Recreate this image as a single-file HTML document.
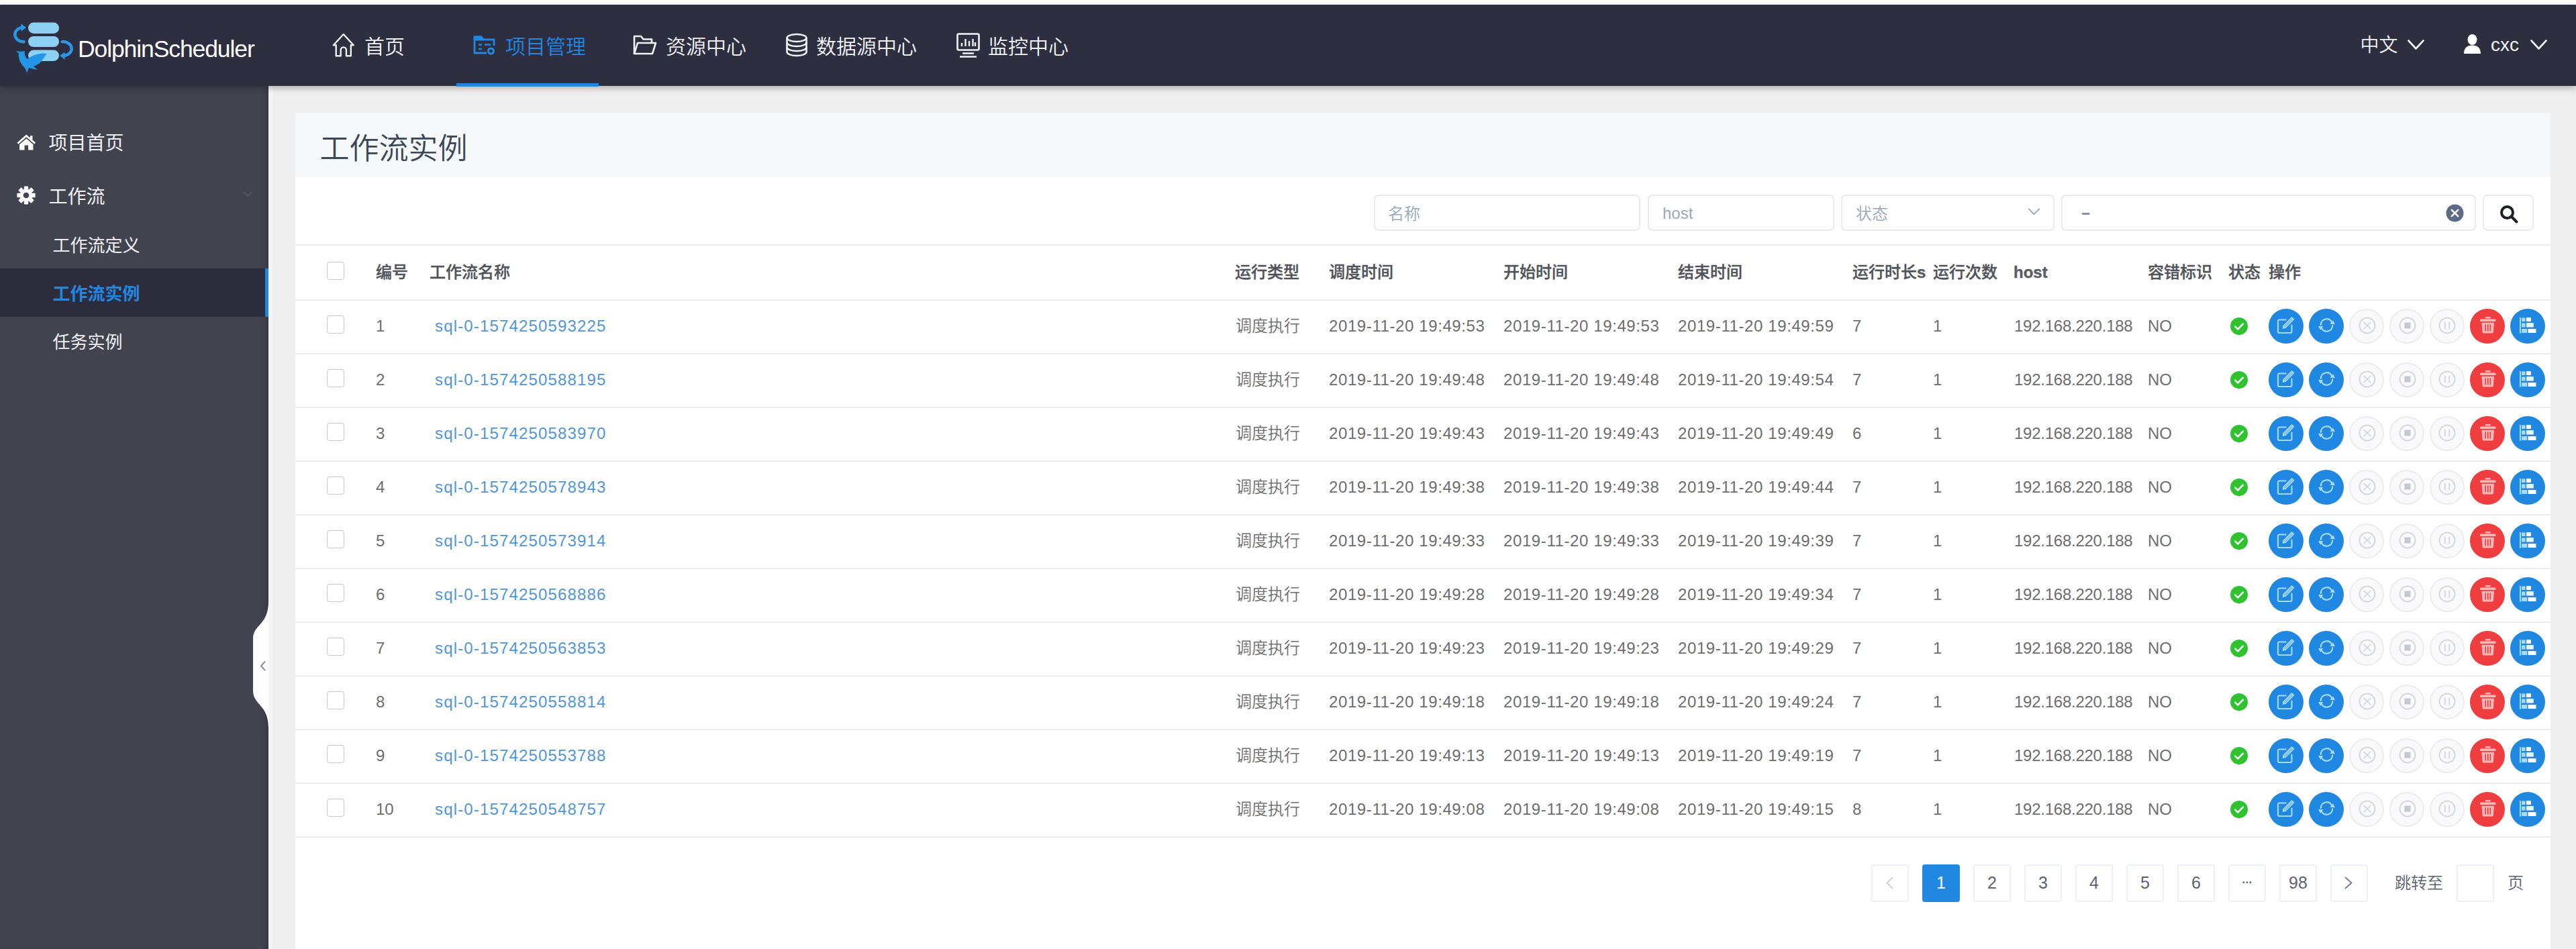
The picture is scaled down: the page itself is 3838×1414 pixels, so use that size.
<!DOCTYPE html>
<html lang="zh-CN"><head><meta charset="utf-8"><title>工作流实例 - DolphinScheduler</title>
<style>
*{box-sizing:border-box;margin:0;padding:0}
html,body{width:3838px;height:1414px;overflow:hidden}
body{position:relative;background:#efeeef;font-family:"Liberation Sans","Noto Sans CJK SC",sans-serif;color:#6e6e6e;font-weight:350}
.abs{position:absolute}
svg{position:absolute;overflow:visible}
#top{position:absolute;left:0;top:0;width:3838px;height:8px;background:#fff}
header{position:absolute;left:0;top:7px;width:3838px;height:121px;background:#2d2e40;box-shadow:0 3px 9px rgba(0,0,0,.28);z-index:5}
aside{position:absolute;left:0;top:128px;width:400px;height:1286px;background:#41444f;z-index:3;box-shadow:inset -9px 0 8px -6px rgba(20,22,35,.28)}
main{position:absolute;left:440px;top:168px;width:3360px;height:1246px;background:#fff}
.band{position:absolute;left:0;top:0;width:3360px;height:96px;background:#f5f9fc}
.inp{position:absolute;top:122px;height:54px;border:2px solid #e8ecf1;border-radius:7px;background:#fff}
.hl{position:absolute;left:0;width:3360px;height:2px;background:#ececf0}
.row{position:absolute;left:0;width:3360px;height:80px;font-size:24px;line-height:80px;color:#6e6e6e;font-weight:350}
.row span{position:absolute;top:-2px;white-space:nowrap}
.row.h span{font-weight:500;color:#50545a;top:0px;-webkit-text-stroke:.35px #50545a}.row.h b{font-weight:700;color:#5a5e64}
.cb{position:absolute;left:46.5px;width:26.5px;height:27px;border:1.6px solid #c6c8cc;border-radius:3.5px;background:#fff}
.c1{left:120px}.c2{left:208px}.c3{left:1401px}.c4{left:1540px}.c5{left:1800px}.c6{left:2060px}
.c7{left:2320px}.c8{left:2440px}.c9{left:2561px}.c10{left:2760px}
.row a{color:#5196db;text-decoration:none;letter-spacing:1.15px}
.d{letter-spacing:.6px}.ip{letter-spacing:-.25px}
.btn{position:absolute;top:12px;width:52px;height:52px;border-radius:50%}
.b{background:#2188e2}.r{background:#f03e40}.g{background:#f9f9fb;border:2px solid #ececf1}
.pg{position:absolute;top:1120px;width:56px;height:56px;border:2px solid #ecf0f5;border-radius:4px;background:#fff;font-size:25px;line-height:50px;text-align:center;color:#5c6370}
.pg.on{background:#2188e2;border-color:#2188e2;color:#fff}
</style></head><body>
<div id="top"></div>
<header>
<svg style="left:0;top:-7px" width="130" height="128" viewBox="0 0 130 128">
<rect x="42" y="33.5" width="46" height="16.5" rx="8.2" fill="#8dd0f4"/>
<rect x="42" y="54" width="46" height="16" rx="8" fill="#8dd0f4"/>
<rect x="42" y="74.5" width="46" height="16.5" rx="8.2" fill="#8dd0f4"/>
<path d="M35.500 62.300 A13.300 10.800 0 0 1 33 40.900" fill="none" stroke="#2a97e4" stroke-width="4.400" stroke-linecap="round"/>
<path d="M31.500 35.300 L31.500 46.700 L39 41 Z" fill="#2a97e4"/>
<path d="M92.500 62.100 A13.300 10.500 0 0 1 95 83" fill="none" stroke="#2a97e4" stroke-width="4.400" stroke-linecap="round"/>
<path d="M96.500 77.400 L96.500 88.800 L89 83.100 Z" fill="#2a97e4"/>
<path d="M24 76 C29 77 33 77 37 76 C36 80 37 84 41 88 C48 82 60 78 70 80 C66 84 64 90 58 95 C54 97 52 98 50 99 L56 104 C50 103 46 102 43 101 L40 109 C39 104 37 101 35 99 C30 94 27 86 28 80 Z" fill="#2496e6"/>
</svg>
<div style="position:absolute;left:116px;top:41.5px;height:49px;line-height:49px;font-size:35.5px;color:#fff;white-space:nowrap;letter-spacing:-1.1px;">DolphinScheduler</div>
<svg style="left:494px;top:42px" width="36" height="36" viewBox="0 0 36 36" fill="none" stroke="#f2f3f6" stroke-width="2.400" stroke-linejoin="round" stroke-linecap="round">
<path d="M2.800 18.200 L17.750 2 L32.700 18.200 H28.800 V34.300 H21.900 V25.500 A4.100 4.100 0 0 0 13.700 25.500 V34.300 H6.700 V18.200 Z"/></svg>
<div style="position:absolute;left:543px;top:40.5px;height:44px;line-height:44px;font-size:30px;color:#f2f3f6;white-space:nowrap;">首页</div>
<svg style="left:705px;top:45px" width="34" height="30" viewBox="0 0 34 30" fill="none" stroke="#2188e2" stroke-width="2.8" stroke-linejoin="round">
<path d="M20 27 H2 V3 H12 L15 7 H31 V16"/><path d="M2 3 H12 L15 7 H2 Z" fill="#2188e2"/>
<path d="M8 14.5 H13 M8 21 H13 M17 14.5 H26" stroke-width="2.6"/>
<circle cx="26.5" cy="24" r="4" stroke-width="3"/></svg>
<div style="position:absolute;left:753px;top:40.5px;height:44px;line-height:44px;font-size:30px;color:#2188e2;white-space:nowrap;">项目管理</div>
<div class="abs" style="left:680px;top:117px;width:212px;height:5px;background:#2188e2"></div>
<svg style="left:943px;top:45px" width="36" height="30" viewBox="0 0 36 30" fill="none" stroke="#f2f3f6" stroke-width="2.6" stroke-linejoin="round">
<path d="M2 28 V2 H12 L15.5 6.5 H28 V12"/><path d="M2 28 L7 12 H34 L29 28 Z"/></svg>
<div style="position:absolute;left:992px;top:40.5px;height:44px;line-height:44px;font-size:30px;color:#f2f3f6;white-space:nowrap;">资源中心</div>
<svg style="left:1170px;top:42px" width="34" height="36" viewBox="0 0 34 36" fill="none" stroke="#f2f3f6" stroke-width="2.6">
<ellipse cx="17" cy="7.5" rx="14.5" ry="5.5"/><path d="M2.5 7.5 V28.5 C2.5 31.5 9 34 17 34 C25 34 31.5 31.5 31.5 28.5 V7.5"/>
<path d="M2.5 14.5 C2.5 17.5 9 20 17 20 C25 20 31.5 17.5 31.5 14.5 M2.5 21.5 C2.5 24.5 9 27 17 27 C25 27 31.5 24.5 31.5 21.5"/></svg>
<div style="position:absolute;left:1216px;top:40.5px;height:44px;line-height:44px;font-size:30px;color:#f2f3f6;white-space:nowrap;">数据源中心</div>
<svg style="left:1425px;top:42px" width="35" height="37" viewBox="0 0 35 37" fill="none" stroke="#f2f3f6" stroke-width="2.6" stroke-linejoin="round">
<rect x="1.5" y="1.5" width="32" height="24" rx="2"/><path d="M8 20 V15 M13.5 20 V9 M19 20 V12 M24.5 20 V9 M28 20 V14" stroke-width="2.4"/>
<path d="M9 30.5 H26 M5 35.5 H30"/></svg>
<div style="position:absolute;left:1472px;top:40.5px;height:44px;line-height:44px;font-size:30px;color:#f2f3f6;white-space:nowrap;">监控中心</div>
<div style="position:absolute;left:3516.5px;top:39.5px;height:42px;line-height:42px;font-size:28px;color:#f2f3f6;white-space:nowrap;">中文</div>
<svg style="left:3587px;top:52px" width="25" height="16" viewBox="0 0 25 16" fill="none" stroke="#f2f3f6" stroke-width="2.6" stroke-linecap="round" stroke-linejoin="round"><path d="M1.5 1.5 L12.5 13.5 L23.5 1.5"/></svg>
<svg style="left:3671px;top:44px" width="25" height="30" viewBox="0 0 25 30" fill="#fff">
<ellipse cx="12.5" cy="8" rx="7" ry="8"/><path d="M0 29 C0 20 5 16.5 12.5 16.5 C20 16.5 25 20 25 29 Z"/></svg>
<div style="position:absolute;left:3711px;top:39.0px;height:42px;line-height:42px;font-size:28px;color:#f2f3f6;white-space:nowrap;">cxc</div>
<svg style="left:3770px;top:52px" width="25" height="16" viewBox="0 0 25 16" fill="none" stroke="#f2f3f6" stroke-width="2.6" stroke-linecap="round" stroke-linejoin="round"><path d="M1.5 1.5 L12.5 13.5 L23.5 1.5"/></svg>
</header>
<aside>
<svg style="left:25px;top:71.5px" width="28.5" height="23.5" viewBox="0 0 28 22" preserveAspectRatio="none" fill="#fff">
<path d="M14 0.5 L0.5 11.8 L2.2 13.8 L14 4 L25.8 13.8 L27.5 11.8 L23 8 V2 H19.5 V5.2 Z"/><path d="M14 6 L4 14.3 V22 H11.3 V15.5 H16.7 V22 H24 V14.3 Z"/></svg>
<div style="position:absolute;left:72.5px;top:65.0px;height:42px;line-height:42px;font-size:28px;color:#f0f1f4;white-space:nowrap;font-weight:400;">项目首页</div>
<svg style="left:25px;top:149px" width="28" height="28" viewBox="0 0 28 28"><g transform="translate(14 14)" fill="#fff">
<circle r="9.2"/><rect x="-3.2" y="-13.6" width="6.4" height="8" rx="1" transform="rotate(0)"/><rect x="-3.2" y="-13.6" width="6.4" height="8" rx="1" transform="rotate(45)"/><rect x="-3.2" y="-13.6" width="6.4" height="8" rx="1" transform="rotate(90)"/><rect x="-3.2" y="-13.6" width="6.4" height="8" rx="1" transform="rotate(135)"/><rect x="-3.2" y="-13.6" width="6.4" height="8" rx="1" transform="rotate(180)"/><rect x="-3.2" y="-13.6" width="6.4" height="8" rx="1" transform="rotate(225)"/><rect x="-3.2" y="-13.6" width="6.4" height="8" rx="1" transform="rotate(270)"/><rect x="-3.2" y="-13.6" width="6.4" height="8" rx="1" transform="rotate(315)"/><circle r="4.3" fill="#41444f"/></g></svg>
<div style="position:absolute;left:72.5px;top:144.5px;height:42px;line-height:42px;font-size:28px;color:#f0f1f4;white-space:nowrap;font-weight:400;">工作流</div>
<svg style="left:362px;top:157px" width="14" height="9" viewBox="0 0 14 9" fill="none" stroke="#4f535f" stroke-width="2.4" stroke-linecap="round" stroke-linejoin="round"><path d="M1.5 1.5 L7 7 L12.5 1.5"/></svg>
<div style="position:absolute;left:78.5px;top:218.0px;height:40px;line-height:40px;font-size:26px;color:#f0f1f4;white-space:nowrap;font-weight:400;">工作流定义</div>
<div class="abs" style="left:0;top:272px;width:400px;height:72px;background:#2b2d3d;border-right:5px solid #2188e2"></div>
<div style="position:absolute;left:78.5px;top:289.5px;height:40px;line-height:40px;font-size:26px;color:#2188e2;white-space:nowrap;font-weight:700;">工作流实例</div>
<div style="position:absolute;left:78.5px;top:361.5px;height:40px;line-height:40px;font-size:26px;color:#f0f1f4;white-space:nowrap;font-weight:400;">任务实例</div>
<svg style="left:370px;top:768px" width="30" height="189" viewBox="0 0 30 189">
<path d="M30 0 C30 36 7 34 7 56 V133 C7 155 30 153 30 189 Z" fill="#fefeff"/>
<path d="M24.500 90 L19 96.200 L24.500 102.400" fill="none" stroke="#8d93a0" stroke-width="2.200" stroke-linecap="round" stroke-linejoin="round"/></svg>
</aside>
<div class="abs" style="left:400px;top:128px;width:6px;height:1286px;background:#f4f4f7"></div>
<main>
<div class="band"></div>
<div style="position:absolute;left:36.5px;top:22.0px;height:64px;line-height:64px;font-size:44px;color:#3a4757;white-space:nowrap;font-weight:350;">工作流实例</div>
<div class="inp" style="left:1607px;width:397px"><div style="position:absolute;left:19px;top:8.5px;height:36px;line-height:36px;font-size:24px;color:#9aa8bc;white-space:nowrap;">名称</div></div>
<div class="inp" style="left:2015px;width:278px"><div style="position:absolute;left:20px;top:8.0px;height:36px;line-height:36px;font-size:24px;color:#9aa8bc;white-space:nowrap;">host</div></div>
<div class="inp" style="left:2303px;width:318px"><div style="position:absolute;left:20px;top:8.5px;height:36px;line-height:36px;font-size:24px;color:#9aa8bc;white-space:nowrap;">状态</div><svg style="left:276px;top:18px" width="19" height="11" viewBox="0 0 20 12" fill="none" stroke="#97a2b3" stroke-width="2" stroke-linecap="round" stroke-linejoin="round"><path d="M1.5 1.5 L10 10 L18.5 1.5"/></svg></div>
<div class="inp" style="left:2631px;width:618px"><div style="position:absolute;left:27px;top:7.5px;height:36px;line-height:36px;font-size:24px;color:#8591a3;white-space:nowrap;"><span style="display:inline-block;transform:scale(1.9,1.5);transform-origin:0 62%">-</span></div><svg style="left:571px;top:12px" width="27" height="27" viewBox="0 0 27 27"><circle cx="13.5" cy="13.5" r="13" fill="#5b6b85"/><path d="M8.8 8.8 L18.2 18.2 M18.2 8.8 L8.8 18.2" stroke="#fff" stroke-width="2.6" stroke-linecap="round"/></svg></div>
<div class="inp" style="left:3259px;width:76px"><svg style="left:23px;top:13px" width="28" height="28" viewBox="0 0 28 28" fill="none" stroke="#1c1f26" stroke-width="4" stroke-linecap="round"><circle cx="11.5" cy="11.5" r="8.5"/><path d="M18.5 18.5 L25.5 25.5"/></svg></div>
<div class="hl" style="top:196px"></div>
<div class="row h" style="top:198px"><i class="cb" style="top:24px"></i><span class="c1">编号</span><span class="c2" style="left:200px">工作流名称</span><span class="c3" style="left:1400px">运行类型</span><span class="c4">调度时间</span><span class="c5">开始时间</span><span class="c6">结束时间</span><span class="c7">运行时长<b>s</b></span><span class="c8">运行次数</span><span class="c9" style="left:2560px"><b>host</b></span><span class="c10">容错标识</span><span style="left:2880px">状态</span><span style="left:2940px">操作</span></div>
<div class="hl" style="top:278px"></div>
<div class="row" style="top:280px"><i class="cb" style="top:22px"></i><span class="c1">1</span><span class="c2"><a>sql-0-1574250593225</a></span><span class="c3">调度执行</span><span class="c4 d">2019-11-20 19:49:53</span><span class="c5 d">2019-11-20 19:49:53</span><span class="c6 d">2019-11-20 19:49:59</span><span class="c7">7</span><span class="c8">1</span><span class="c9 ip">192.168.220.188</span><span class="c10">NO</span><svg style="left:2883px;top:25px" width="26" height="26" viewBox="0 0 26 26"><circle cx="13" cy="13" r="13" fill="#2fc32f"/><path d="M7.300 13.600 L11.300 17.400 L18.900 9.700" fill="none" stroke="#fff" stroke-width="2.500" stroke-linecap="round" stroke-linejoin="round"/></svg><div class="btn b" style="left:2939.5px"><svg style="left:12px;top:11px" width="28" height="27" viewBox="0 0 28 27" fill="none" stroke="#a6dafb" stroke-width="2.1" stroke-linejoin="round" stroke-linecap="round"><path d="M13.5 5.500 H4 A2 2 0 0 0 2 7.500 V23 A2 2 0 0 0 4 25 H20.500 A2 2 0 0 0 22.500 23 V13.500"/><path d="M9.500 17.800 L10.300 14.300 L22.500 2.100 L25.300 4.900 L13.100 17.100 Z" stroke-width="1.700"/><path d="M10.300 17 L23.500 3.800" stroke-width="1.400"/></svg></div><div class="btn b" style="left:2999.5px"><svg style="left:13px;top:14px" width="27" height="21" viewBox="0 0 27 21" fill="none" stroke="#a6dafb" stroke-width="2.200" stroke-linecap="round"><path d="M4.800 10 A8.700 8.700 0 0 1 20.800 5.300"/><path d="M22.200 11 A8.700 8.700 0 0 1 6.200 15.700"/><path d="M26 9.300 L18.500 8.800 L23 3.200 Z" fill="#a6dafb" stroke="none"/><path d="M1 11.700 L8.500 12.200 L4 17.800 Z" fill="#a6dafb" stroke="none"/></svg></div><div class="btn g" style="left:3059.5px"><svg style="left:12px;top:10px" width="26" height="26" viewBox="0 0 26 26" fill="none" stroke="#d6d8e0" stroke-width="2"><circle cx="13" cy="13" r="11.500"/><path d="M8.300 8.300 L17.700 17.700 M17.700 8.300 L8.300 17.700" stroke-linecap="round" stroke-width="1.800"/></svg></div><div class="btn g" style="left:3119.5px"><svg style="left:12px;top:10px" width="26" height="26" viewBox="0 0 26 26" fill="none" stroke="#d6d8e0" stroke-width="2"><circle cx="13" cy="13" r="11.500"/><rect x="8.500" y="8.500" width="9" height="9" rx="1" fill="#c6c8d0" stroke="none"/></svg></div><div class="btn g" style="left:3179.5px"><svg style="left:11.500px;top:10px" width="26" height="26" viewBox="0 0 26 26" fill="none" stroke="#d6d8e0" stroke-width="2"><circle cx="13" cy="13" r="11.500"/><path d="M9.800 8.500 V17.500 M16.200 8.500 V17.500" stroke-width="2" stroke-linecap="round"/></svg></div><div class="btn r" style="left:3239.5px"><svg style="left:15px;top:11.500px" width="23.500" height="24.500" viewBox="0 0 24 25" fill="#fbb9ba"><path d="M8 0 H16 V2.500 H8 Z"/><rect x="0" y="3.500" width="24" height="3.600" rx="1"/><path d="M2.500 8.800 H21.500 L20.300 23.500 A1.500 1.500 0 0 1 18.800 25 H5.200 A1.500 1.500 0 0 1 3.700 23.500 Z"/><path d="M8.300 11.500 V22 M12 11.500 V22 M15.700 11.500 V22" stroke="#f03e40" stroke-width="1.700" fill="none"/></svg></div><div class="btn b" style="left:3299.5px"><svg style="left:14.500px;top:12.500px" width="24.500" height="23.500" viewBox="0 0 24.500 23.500" fill="#a6dafb"><rect x="0" y="0" width="2" height="23.500"/><rect x="3" y="0.500" width="5.500" height="5.500"/><rect x="10" y="0" width="6.800" height="6" fill="#fff"/><rect x="3" y="8.500" width="5.500" height="6"/><rect x="10" y="8" width="10.800" height="6.500" fill="#e8f5fe"/><rect x="3" y="17" width="8" height="6"/><rect x="12.500" y="17" width="12" height="6" fill="#fff"/></svg></div></div>
<div class="hl" style="top:358px"></div>
<div class="row" style="top:360px"><i class="cb" style="top:22px"></i><span class="c1">2</span><span class="c2"><a>sql-0-1574250588195</a></span><span class="c3">调度执行</span><span class="c4 d">2019-11-20 19:49:48</span><span class="c5 d">2019-11-20 19:49:48</span><span class="c6 d">2019-11-20 19:49:54</span><span class="c7">7</span><span class="c8">1</span><span class="c9 ip">192.168.220.188</span><span class="c10">NO</span><svg style="left:2883px;top:25px" width="26" height="26" viewBox="0 0 26 26"><circle cx="13" cy="13" r="13" fill="#2fc32f"/><path d="M7.300 13.600 L11.300 17.400 L18.900 9.700" fill="none" stroke="#fff" stroke-width="2.500" stroke-linecap="round" stroke-linejoin="round"/></svg><div class="btn b" style="left:2939.5px"><svg style="left:12px;top:11px" width="28" height="27" viewBox="0 0 28 27" fill="none" stroke="#a6dafb" stroke-width="2.1" stroke-linejoin="round" stroke-linecap="round"><path d="M13.5 5.500 H4 A2 2 0 0 0 2 7.500 V23 A2 2 0 0 0 4 25 H20.500 A2 2 0 0 0 22.500 23 V13.500"/><path d="M9.500 17.800 L10.300 14.300 L22.500 2.100 L25.300 4.900 L13.100 17.100 Z" stroke-width="1.700"/><path d="M10.300 17 L23.500 3.800" stroke-width="1.400"/></svg></div><div class="btn b" style="left:2999.5px"><svg style="left:13px;top:14px" width="27" height="21" viewBox="0 0 27 21" fill="none" stroke="#a6dafb" stroke-width="2.200" stroke-linecap="round"><path d="M4.800 10 A8.700 8.700 0 0 1 20.800 5.300"/><path d="M22.200 11 A8.700 8.700 0 0 1 6.200 15.700"/><path d="M26 9.300 L18.500 8.800 L23 3.200 Z" fill="#a6dafb" stroke="none"/><path d="M1 11.700 L8.500 12.200 L4 17.800 Z" fill="#a6dafb" stroke="none"/></svg></div><div class="btn g" style="left:3059.5px"><svg style="left:12px;top:10px" width="26" height="26" viewBox="0 0 26 26" fill="none" stroke="#d6d8e0" stroke-width="2"><circle cx="13" cy="13" r="11.500"/><path d="M8.300 8.300 L17.700 17.700 M17.700 8.300 L8.300 17.700" stroke-linecap="round" stroke-width="1.800"/></svg></div><div class="btn g" style="left:3119.5px"><svg style="left:12px;top:10px" width="26" height="26" viewBox="0 0 26 26" fill="none" stroke="#d6d8e0" stroke-width="2"><circle cx="13" cy="13" r="11.500"/><rect x="8.500" y="8.500" width="9" height="9" rx="1" fill="#c6c8d0" stroke="none"/></svg></div><div class="btn g" style="left:3179.5px"><svg style="left:11.500px;top:10px" width="26" height="26" viewBox="0 0 26 26" fill="none" stroke="#d6d8e0" stroke-width="2"><circle cx="13" cy="13" r="11.500"/><path d="M9.800 8.500 V17.500 M16.200 8.500 V17.500" stroke-width="2" stroke-linecap="round"/></svg></div><div class="btn r" style="left:3239.5px"><svg style="left:15px;top:11.500px" width="23.500" height="24.500" viewBox="0 0 24 25" fill="#fbb9ba"><path d="M8 0 H16 V2.500 H8 Z"/><rect x="0" y="3.500" width="24" height="3.600" rx="1"/><path d="M2.500 8.800 H21.500 L20.300 23.500 A1.500 1.500 0 0 1 18.800 25 H5.200 A1.500 1.500 0 0 1 3.700 23.500 Z"/><path d="M8.300 11.500 V22 M12 11.500 V22 M15.700 11.500 V22" stroke="#f03e40" stroke-width="1.700" fill="none"/></svg></div><div class="btn b" style="left:3299.5px"><svg style="left:14.500px;top:12.500px" width="24.500" height="23.500" viewBox="0 0 24.500 23.500" fill="#a6dafb"><rect x="0" y="0" width="2" height="23.500"/><rect x="3" y="0.500" width="5.500" height="5.500"/><rect x="10" y="0" width="6.800" height="6" fill="#fff"/><rect x="3" y="8.500" width="5.500" height="6"/><rect x="10" y="8" width="10.800" height="6.500" fill="#e8f5fe"/><rect x="3" y="17" width="8" height="6"/><rect x="12.500" y="17" width="12" height="6" fill="#fff"/></svg></div></div>
<div class="hl" style="top:438px"></div>
<div class="row" style="top:440px"><i class="cb" style="top:22px"></i><span class="c1">3</span><span class="c2"><a>sql-0-1574250583970</a></span><span class="c3">调度执行</span><span class="c4 d">2019-11-20 19:49:43</span><span class="c5 d">2019-11-20 19:49:43</span><span class="c6 d">2019-11-20 19:49:49</span><span class="c7">6</span><span class="c8">1</span><span class="c9 ip">192.168.220.188</span><span class="c10">NO</span><svg style="left:2883px;top:25px" width="26" height="26" viewBox="0 0 26 26"><circle cx="13" cy="13" r="13" fill="#2fc32f"/><path d="M7.300 13.600 L11.300 17.400 L18.900 9.700" fill="none" stroke="#fff" stroke-width="2.500" stroke-linecap="round" stroke-linejoin="round"/></svg><div class="btn b" style="left:2939.5px"><svg style="left:12px;top:11px" width="28" height="27" viewBox="0 0 28 27" fill="none" stroke="#a6dafb" stroke-width="2.1" stroke-linejoin="round" stroke-linecap="round"><path d="M13.5 5.500 H4 A2 2 0 0 0 2 7.500 V23 A2 2 0 0 0 4 25 H20.500 A2 2 0 0 0 22.500 23 V13.500"/><path d="M9.500 17.800 L10.300 14.300 L22.500 2.100 L25.300 4.900 L13.100 17.100 Z" stroke-width="1.700"/><path d="M10.300 17 L23.500 3.800" stroke-width="1.400"/></svg></div><div class="btn b" style="left:2999.5px"><svg style="left:13px;top:14px" width="27" height="21" viewBox="0 0 27 21" fill="none" stroke="#a6dafb" stroke-width="2.200" stroke-linecap="round"><path d="M4.800 10 A8.700 8.700 0 0 1 20.800 5.300"/><path d="M22.200 11 A8.700 8.700 0 0 1 6.200 15.700"/><path d="M26 9.300 L18.500 8.800 L23 3.200 Z" fill="#a6dafb" stroke="none"/><path d="M1 11.700 L8.500 12.200 L4 17.800 Z" fill="#a6dafb" stroke="none"/></svg></div><div class="btn g" style="left:3059.5px"><svg style="left:12px;top:10px" width="26" height="26" viewBox="0 0 26 26" fill="none" stroke="#d6d8e0" stroke-width="2"><circle cx="13" cy="13" r="11.500"/><path d="M8.300 8.300 L17.700 17.700 M17.700 8.300 L8.300 17.700" stroke-linecap="round" stroke-width="1.800"/></svg></div><div class="btn g" style="left:3119.5px"><svg style="left:12px;top:10px" width="26" height="26" viewBox="0 0 26 26" fill="none" stroke="#d6d8e0" stroke-width="2"><circle cx="13" cy="13" r="11.500"/><rect x="8.500" y="8.500" width="9" height="9" rx="1" fill="#c6c8d0" stroke="none"/></svg></div><div class="btn g" style="left:3179.5px"><svg style="left:11.500px;top:10px" width="26" height="26" viewBox="0 0 26 26" fill="none" stroke="#d6d8e0" stroke-width="2"><circle cx="13" cy="13" r="11.500"/><path d="M9.800 8.500 V17.500 M16.200 8.500 V17.500" stroke-width="2" stroke-linecap="round"/></svg></div><div class="btn r" style="left:3239.5px"><svg style="left:15px;top:11.500px" width="23.500" height="24.500" viewBox="0 0 24 25" fill="#fbb9ba"><path d="M8 0 H16 V2.500 H8 Z"/><rect x="0" y="3.500" width="24" height="3.600" rx="1"/><path d="M2.500 8.800 H21.500 L20.300 23.500 A1.500 1.500 0 0 1 18.800 25 H5.200 A1.500 1.500 0 0 1 3.700 23.500 Z"/><path d="M8.300 11.500 V22 M12 11.500 V22 M15.700 11.500 V22" stroke="#f03e40" stroke-width="1.700" fill="none"/></svg></div><div class="btn b" style="left:3299.5px"><svg style="left:14.500px;top:12.500px" width="24.500" height="23.500" viewBox="0 0 24.500 23.500" fill="#a6dafb"><rect x="0" y="0" width="2" height="23.500"/><rect x="3" y="0.500" width="5.500" height="5.500"/><rect x="10" y="0" width="6.800" height="6" fill="#fff"/><rect x="3" y="8.500" width="5.500" height="6"/><rect x="10" y="8" width="10.800" height="6.500" fill="#e8f5fe"/><rect x="3" y="17" width="8" height="6"/><rect x="12.500" y="17" width="12" height="6" fill="#fff"/></svg></div></div>
<div class="hl" style="top:518px"></div>
<div class="row" style="top:520px"><i class="cb" style="top:22px"></i><span class="c1">4</span><span class="c2"><a>sql-0-1574250578943</a></span><span class="c3">调度执行</span><span class="c4 d">2019-11-20 19:49:38</span><span class="c5 d">2019-11-20 19:49:38</span><span class="c6 d">2019-11-20 19:49:44</span><span class="c7">7</span><span class="c8">1</span><span class="c9 ip">192.168.220.188</span><span class="c10">NO</span><svg style="left:2883px;top:25px" width="26" height="26" viewBox="0 0 26 26"><circle cx="13" cy="13" r="13" fill="#2fc32f"/><path d="M7.300 13.600 L11.300 17.400 L18.900 9.700" fill="none" stroke="#fff" stroke-width="2.500" stroke-linecap="round" stroke-linejoin="round"/></svg><div class="btn b" style="left:2939.5px"><svg style="left:12px;top:11px" width="28" height="27" viewBox="0 0 28 27" fill="none" stroke="#a6dafb" stroke-width="2.1" stroke-linejoin="round" stroke-linecap="round"><path d="M13.5 5.500 H4 A2 2 0 0 0 2 7.500 V23 A2 2 0 0 0 4 25 H20.500 A2 2 0 0 0 22.500 23 V13.500"/><path d="M9.500 17.800 L10.300 14.300 L22.500 2.100 L25.300 4.900 L13.100 17.100 Z" stroke-width="1.700"/><path d="M10.300 17 L23.500 3.800" stroke-width="1.400"/></svg></div><div class="btn b" style="left:2999.5px"><svg style="left:13px;top:14px" width="27" height="21" viewBox="0 0 27 21" fill="none" stroke="#a6dafb" stroke-width="2.200" stroke-linecap="round"><path d="M4.800 10 A8.700 8.700 0 0 1 20.800 5.300"/><path d="M22.200 11 A8.700 8.700 0 0 1 6.200 15.700"/><path d="M26 9.300 L18.500 8.800 L23 3.200 Z" fill="#a6dafb" stroke="none"/><path d="M1 11.700 L8.500 12.200 L4 17.800 Z" fill="#a6dafb" stroke="none"/></svg></div><div class="btn g" style="left:3059.5px"><svg style="left:12px;top:10px" width="26" height="26" viewBox="0 0 26 26" fill="none" stroke="#d6d8e0" stroke-width="2"><circle cx="13" cy="13" r="11.500"/><path d="M8.300 8.300 L17.700 17.700 M17.700 8.300 L8.300 17.700" stroke-linecap="round" stroke-width="1.800"/></svg></div><div class="btn g" style="left:3119.5px"><svg style="left:12px;top:10px" width="26" height="26" viewBox="0 0 26 26" fill="none" stroke="#d6d8e0" stroke-width="2"><circle cx="13" cy="13" r="11.500"/><rect x="8.500" y="8.500" width="9" height="9" rx="1" fill="#c6c8d0" stroke="none"/></svg></div><div class="btn g" style="left:3179.5px"><svg style="left:11.500px;top:10px" width="26" height="26" viewBox="0 0 26 26" fill="none" stroke="#d6d8e0" stroke-width="2"><circle cx="13" cy="13" r="11.500"/><path d="M9.800 8.500 V17.500 M16.200 8.500 V17.500" stroke-width="2" stroke-linecap="round"/></svg></div><div class="btn r" style="left:3239.5px"><svg style="left:15px;top:11.500px" width="23.500" height="24.500" viewBox="0 0 24 25" fill="#fbb9ba"><path d="M8 0 H16 V2.500 H8 Z"/><rect x="0" y="3.500" width="24" height="3.600" rx="1"/><path d="M2.500 8.800 H21.500 L20.300 23.500 A1.500 1.500 0 0 1 18.800 25 H5.200 A1.500 1.500 0 0 1 3.700 23.500 Z"/><path d="M8.300 11.500 V22 M12 11.500 V22 M15.700 11.500 V22" stroke="#f03e40" stroke-width="1.700" fill="none"/></svg></div><div class="btn b" style="left:3299.5px"><svg style="left:14.500px;top:12.500px" width="24.500" height="23.500" viewBox="0 0 24.500 23.500" fill="#a6dafb"><rect x="0" y="0" width="2" height="23.500"/><rect x="3" y="0.500" width="5.500" height="5.500"/><rect x="10" y="0" width="6.800" height="6" fill="#fff"/><rect x="3" y="8.500" width="5.500" height="6"/><rect x="10" y="8" width="10.800" height="6.500" fill="#e8f5fe"/><rect x="3" y="17" width="8" height="6"/><rect x="12.500" y="17" width="12" height="6" fill="#fff"/></svg></div></div>
<div class="hl" style="top:598px"></div>
<div class="row" style="top:600px"><i class="cb" style="top:22px"></i><span class="c1">5</span><span class="c2"><a>sql-0-1574250573914</a></span><span class="c3">调度执行</span><span class="c4 d">2019-11-20 19:49:33</span><span class="c5 d">2019-11-20 19:49:33</span><span class="c6 d">2019-11-20 19:49:39</span><span class="c7">7</span><span class="c8">1</span><span class="c9 ip">192.168.220.188</span><span class="c10">NO</span><svg style="left:2883px;top:25px" width="26" height="26" viewBox="0 0 26 26"><circle cx="13" cy="13" r="13" fill="#2fc32f"/><path d="M7.300 13.600 L11.300 17.400 L18.900 9.700" fill="none" stroke="#fff" stroke-width="2.500" stroke-linecap="round" stroke-linejoin="round"/></svg><div class="btn b" style="left:2939.5px"><svg style="left:12px;top:11px" width="28" height="27" viewBox="0 0 28 27" fill="none" stroke="#a6dafb" stroke-width="2.1" stroke-linejoin="round" stroke-linecap="round"><path d="M13.5 5.500 H4 A2 2 0 0 0 2 7.500 V23 A2 2 0 0 0 4 25 H20.500 A2 2 0 0 0 22.500 23 V13.500"/><path d="M9.500 17.800 L10.300 14.300 L22.500 2.100 L25.300 4.900 L13.100 17.100 Z" stroke-width="1.700"/><path d="M10.300 17 L23.500 3.800" stroke-width="1.400"/></svg></div><div class="btn b" style="left:2999.5px"><svg style="left:13px;top:14px" width="27" height="21" viewBox="0 0 27 21" fill="none" stroke="#a6dafb" stroke-width="2.200" stroke-linecap="round"><path d="M4.800 10 A8.700 8.700 0 0 1 20.800 5.300"/><path d="M22.200 11 A8.700 8.700 0 0 1 6.200 15.700"/><path d="M26 9.300 L18.500 8.800 L23 3.200 Z" fill="#a6dafb" stroke="none"/><path d="M1 11.700 L8.500 12.200 L4 17.800 Z" fill="#a6dafb" stroke="none"/></svg></div><div class="btn g" style="left:3059.5px"><svg style="left:12px;top:10px" width="26" height="26" viewBox="0 0 26 26" fill="none" stroke="#d6d8e0" stroke-width="2"><circle cx="13" cy="13" r="11.500"/><path d="M8.300 8.300 L17.700 17.700 M17.700 8.300 L8.300 17.700" stroke-linecap="round" stroke-width="1.800"/></svg></div><div class="btn g" style="left:3119.5px"><svg style="left:12px;top:10px" width="26" height="26" viewBox="0 0 26 26" fill="none" stroke="#d6d8e0" stroke-width="2"><circle cx="13" cy="13" r="11.500"/><rect x="8.500" y="8.500" width="9" height="9" rx="1" fill="#c6c8d0" stroke="none"/></svg></div><div class="btn g" style="left:3179.5px"><svg style="left:11.500px;top:10px" width="26" height="26" viewBox="0 0 26 26" fill="none" stroke="#d6d8e0" stroke-width="2"><circle cx="13" cy="13" r="11.500"/><path d="M9.800 8.500 V17.500 M16.200 8.500 V17.500" stroke-width="2" stroke-linecap="round"/></svg></div><div class="btn r" style="left:3239.5px"><svg style="left:15px;top:11.500px" width="23.500" height="24.500" viewBox="0 0 24 25" fill="#fbb9ba"><path d="M8 0 H16 V2.500 H8 Z"/><rect x="0" y="3.500" width="24" height="3.600" rx="1"/><path d="M2.500 8.800 H21.500 L20.300 23.500 A1.500 1.500 0 0 1 18.800 25 H5.200 A1.500 1.500 0 0 1 3.700 23.500 Z"/><path d="M8.300 11.500 V22 M12 11.500 V22 M15.700 11.500 V22" stroke="#f03e40" stroke-width="1.700" fill="none"/></svg></div><div class="btn b" style="left:3299.5px"><svg style="left:14.500px;top:12.500px" width="24.500" height="23.500" viewBox="0 0 24.500 23.500" fill="#a6dafb"><rect x="0" y="0" width="2" height="23.500"/><rect x="3" y="0.500" width="5.500" height="5.500"/><rect x="10" y="0" width="6.800" height="6" fill="#fff"/><rect x="3" y="8.500" width="5.500" height="6"/><rect x="10" y="8" width="10.800" height="6.500" fill="#e8f5fe"/><rect x="3" y="17" width="8" height="6"/><rect x="12.500" y="17" width="12" height="6" fill="#fff"/></svg></div></div>
<div class="hl" style="top:678px"></div>
<div class="row" style="top:680px"><i class="cb" style="top:22px"></i><span class="c1">6</span><span class="c2"><a>sql-0-1574250568886</a></span><span class="c3">调度执行</span><span class="c4 d">2019-11-20 19:49:28</span><span class="c5 d">2019-11-20 19:49:28</span><span class="c6 d">2019-11-20 19:49:34</span><span class="c7">7</span><span class="c8">1</span><span class="c9 ip">192.168.220.188</span><span class="c10">NO</span><svg style="left:2883px;top:25px" width="26" height="26" viewBox="0 0 26 26"><circle cx="13" cy="13" r="13" fill="#2fc32f"/><path d="M7.300 13.600 L11.300 17.400 L18.900 9.700" fill="none" stroke="#fff" stroke-width="2.500" stroke-linecap="round" stroke-linejoin="round"/></svg><div class="btn b" style="left:2939.5px"><svg style="left:12px;top:11px" width="28" height="27" viewBox="0 0 28 27" fill="none" stroke="#a6dafb" stroke-width="2.1" stroke-linejoin="round" stroke-linecap="round"><path d="M13.5 5.500 H4 A2 2 0 0 0 2 7.500 V23 A2 2 0 0 0 4 25 H20.500 A2 2 0 0 0 22.500 23 V13.500"/><path d="M9.500 17.800 L10.300 14.300 L22.500 2.100 L25.300 4.900 L13.100 17.100 Z" stroke-width="1.700"/><path d="M10.300 17 L23.500 3.800" stroke-width="1.400"/></svg></div><div class="btn b" style="left:2999.5px"><svg style="left:13px;top:14px" width="27" height="21" viewBox="0 0 27 21" fill="none" stroke="#a6dafb" stroke-width="2.200" stroke-linecap="round"><path d="M4.800 10 A8.700 8.700 0 0 1 20.800 5.300"/><path d="M22.200 11 A8.700 8.700 0 0 1 6.200 15.700"/><path d="M26 9.300 L18.500 8.800 L23 3.200 Z" fill="#a6dafb" stroke="none"/><path d="M1 11.700 L8.500 12.200 L4 17.800 Z" fill="#a6dafb" stroke="none"/></svg></div><div class="btn g" style="left:3059.5px"><svg style="left:12px;top:10px" width="26" height="26" viewBox="0 0 26 26" fill="none" stroke="#d6d8e0" stroke-width="2"><circle cx="13" cy="13" r="11.500"/><path d="M8.300 8.300 L17.700 17.700 M17.700 8.300 L8.300 17.700" stroke-linecap="round" stroke-width="1.800"/></svg></div><div class="btn g" style="left:3119.5px"><svg style="left:12px;top:10px" width="26" height="26" viewBox="0 0 26 26" fill="none" stroke="#d6d8e0" stroke-width="2"><circle cx="13" cy="13" r="11.500"/><rect x="8.500" y="8.500" width="9" height="9" rx="1" fill="#c6c8d0" stroke="none"/></svg></div><div class="btn g" style="left:3179.5px"><svg style="left:11.500px;top:10px" width="26" height="26" viewBox="0 0 26 26" fill="none" stroke="#d6d8e0" stroke-width="2"><circle cx="13" cy="13" r="11.500"/><path d="M9.800 8.500 V17.500 M16.200 8.500 V17.500" stroke-width="2" stroke-linecap="round"/></svg></div><div class="btn r" style="left:3239.5px"><svg style="left:15px;top:11.500px" width="23.500" height="24.500" viewBox="0 0 24 25" fill="#fbb9ba"><path d="M8 0 H16 V2.500 H8 Z"/><rect x="0" y="3.500" width="24" height="3.600" rx="1"/><path d="M2.500 8.800 H21.500 L20.300 23.500 A1.500 1.500 0 0 1 18.800 25 H5.200 A1.500 1.500 0 0 1 3.700 23.500 Z"/><path d="M8.300 11.500 V22 M12 11.500 V22 M15.700 11.500 V22" stroke="#f03e40" stroke-width="1.700" fill="none"/></svg></div><div class="btn b" style="left:3299.5px"><svg style="left:14.500px;top:12.500px" width="24.500" height="23.500" viewBox="0 0 24.500 23.500" fill="#a6dafb"><rect x="0" y="0" width="2" height="23.500"/><rect x="3" y="0.500" width="5.500" height="5.500"/><rect x="10" y="0" width="6.800" height="6" fill="#fff"/><rect x="3" y="8.500" width="5.500" height="6"/><rect x="10" y="8" width="10.800" height="6.500" fill="#e8f5fe"/><rect x="3" y="17" width="8" height="6"/><rect x="12.500" y="17" width="12" height="6" fill="#fff"/></svg></div></div>
<div class="hl" style="top:758px"></div>
<div class="row" style="top:760px"><i class="cb" style="top:22px"></i><span class="c1">7</span><span class="c2"><a>sql-0-1574250563853</a></span><span class="c3">调度执行</span><span class="c4 d">2019-11-20 19:49:23</span><span class="c5 d">2019-11-20 19:49:23</span><span class="c6 d">2019-11-20 19:49:29</span><span class="c7">7</span><span class="c8">1</span><span class="c9 ip">192.168.220.188</span><span class="c10">NO</span><svg style="left:2883px;top:25px" width="26" height="26" viewBox="0 0 26 26"><circle cx="13" cy="13" r="13" fill="#2fc32f"/><path d="M7.300 13.600 L11.300 17.400 L18.900 9.700" fill="none" stroke="#fff" stroke-width="2.500" stroke-linecap="round" stroke-linejoin="round"/></svg><div class="btn b" style="left:2939.5px"><svg style="left:12px;top:11px" width="28" height="27" viewBox="0 0 28 27" fill="none" stroke="#a6dafb" stroke-width="2.1" stroke-linejoin="round" stroke-linecap="round"><path d="M13.5 5.500 H4 A2 2 0 0 0 2 7.500 V23 A2 2 0 0 0 4 25 H20.500 A2 2 0 0 0 22.500 23 V13.500"/><path d="M9.500 17.800 L10.300 14.300 L22.500 2.100 L25.300 4.900 L13.100 17.100 Z" stroke-width="1.700"/><path d="M10.300 17 L23.500 3.800" stroke-width="1.400"/></svg></div><div class="btn b" style="left:2999.5px"><svg style="left:13px;top:14px" width="27" height="21" viewBox="0 0 27 21" fill="none" stroke="#a6dafb" stroke-width="2.200" stroke-linecap="round"><path d="M4.800 10 A8.700 8.700 0 0 1 20.800 5.300"/><path d="M22.200 11 A8.700 8.700 0 0 1 6.200 15.700"/><path d="M26 9.300 L18.500 8.800 L23 3.200 Z" fill="#a6dafb" stroke="none"/><path d="M1 11.700 L8.500 12.200 L4 17.800 Z" fill="#a6dafb" stroke="none"/></svg></div><div class="btn g" style="left:3059.5px"><svg style="left:12px;top:10px" width="26" height="26" viewBox="0 0 26 26" fill="none" stroke="#d6d8e0" stroke-width="2"><circle cx="13" cy="13" r="11.500"/><path d="M8.300 8.300 L17.700 17.700 M17.700 8.300 L8.300 17.700" stroke-linecap="round" stroke-width="1.800"/></svg></div><div class="btn g" style="left:3119.5px"><svg style="left:12px;top:10px" width="26" height="26" viewBox="0 0 26 26" fill="none" stroke="#d6d8e0" stroke-width="2"><circle cx="13" cy="13" r="11.500"/><rect x="8.500" y="8.500" width="9" height="9" rx="1" fill="#c6c8d0" stroke="none"/></svg></div><div class="btn g" style="left:3179.5px"><svg style="left:11.500px;top:10px" width="26" height="26" viewBox="0 0 26 26" fill="none" stroke="#d6d8e0" stroke-width="2"><circle cx="13" cy="13" r="11.500"/><path d="M9.800 8.500 V17.500 M16.200 8.500 V17.500" stroke-width="2" stroke-linecap="round"/></svg></div><div class="btn r" style="left:3239.5px"><svg style="left:15px;top:11.500px" width="23.500" height="24.500" viewBox="0 0 24 25" fill="#fbb9ba"><path d="M8 0 H16 V2.500 H8 Z"/><rect x="0" y="3.500" width="24" height="3.600" rx="1"/><path d="M2.500 8.800 H21.500 L20.300 23.500 A1.500 1.500 0 0 1 18.800 25 H5.200 A1.500 1.500 0 0 1 3.700 23.500 Z"/><path d="M8.300 11.500 V22 M12 11.500 V22 M15.700 11.500 V22" stroke="#f03e40" stroke-width="1.700" fill="none"/></svg></div><div class="btn b" style="left:3299.5px"><svg style="left:14.500px;top:12.500px" width="24.500" height="23.500" viewBox="0 0 24.500 23.500" fill="#a6dafb"><rect x="0" y="0" width="2" height="23.500"/><rect x="3" y="0.500" width="5.500" height="5.500"/><rect x="10" y="0" width="6.800" height="6" fill="#fff"/><rect x="3" y="8.500" width="5.500" height="6"/><rect x="10" y="8" width="10.800" height="6.500" fill="#e8f5fe"/><rect x="3" y="17" width="8" height="6"/><rect x="12.500" y="17" width="12" height="6" fill="#fff"/></svg></div></div>
<div class="hl" style="top:838px"></div>
<div class="row" style="top:840px"><i class="cb" style="top:22px"></i><span class="c1">8</span><span class="c2"><a>sql-0-1574250558814</a></span><span class="c3">调度执行</span><span class="c4 d">2019-11-20 19:49:18</span><span class="c5 d">2019-11-20 19:49:18</span><span class="c6 d">2019-11-20 19:49:24</span><span class="c7">7</span><span class="c8">1</span><span class="c9 ip">192.168.220.188</span><span class="c10">NO</span><svg style="left:2883px;top:25px" width="26" height="26" viewBox="0 0 26 26"><circle cx="13" cy="13" r="13" fill="#2fc32f"/><path d="M7.300 13.600 L11.300 17.400 L18.900 9.700" fill="none" stroke="#fff" stroke-width="2.500" stroke-linecap="round" stroke-linejoin="round"/></svg><div class="btn b" style="left:2939.5px"><svg style="left:12px;top:11px" width="28" height="27" viewBox="0 0 28 27" fill="none" stroke="#a6dafb" stroke-width="2.1" stroke-linejoin="round" stroke-linecap="round"><path d="M13.5 5.500 H4 A2 2 0 0 0 2 7.500 V23 A2 2 0 0 0 4 25 H20.500 A2 2 0 0 0 22.500 23 V13.500"/><path d="M9.500 17.800 L10.300 14.300 L22.500 2.100 L25.300 4.900 L13.100 17.100 Z" stroke-width="1.700"/><path d="M10.300 17 L23.500 3.800" stroke-width="1.400"/></svg></div><div class="btn b" style="left:2999.5px"><svg style="left:13px;top:14px" width="27" height="21" viewBox="0 0 27 21" fill="none" stroke="#a6dafb" stroke-width="2.200" stroke-linecap="round"><path d="M4.800 10 A8.700 8.700 0 0 1 20.800 5.300"/><path d="M22.200 11 A8.700 8.700 0 0 1 6.200 15.700"/><path d="M26 9.300 L18.500 8.800 L23 3.200 Z" fill="#a6dafb" stroke="none"/><path d="M1 11.700 L8.500 12.200 L4 17.800 Z" fill="#a6dafb" stroke="none"/></svg></div><div class="btn g" style="left:3059.5px"><svg style="left:12px;top:10px" width="26" height="26" viewBox="0 0 26 26" fill="none" stroke="#d6d8e0" stroke-width="2"><circle cx="13" cy="13" r="11.500"/><path d="M8.300 8.300 L17.700 17.700 M17.700 8.300 L8.300 17.700" stroke-linecap="round" stroke-width="1.800"/></svg></div><div class="btn g" style="left:3119.5px"><svg style="left:12px;top:10px" width="26" height="26" viewBox="0 0 26 26" fill="none" stroke="#d6d8e0" stroke-width="2"><circle cx="13" cy="13" r="11.500"/><rect x="8.500" y="8.500" width="9" height="9" rx="1" fill="#c6c8d0" stroke="none"/></svg></div><div class="btn g" style="left:3179.5px"><svg style="left:11.500px;top:10px" width="26" height="26" viewBox="0 0 26 26" fill="none" stroke="#d6d8e0" stroke-width="2"><circle cx="13" cy="13" r="11.500"/><path d="M9.800 8.500 V17.500 M16.200 8.500 V17.500" stroke-width="2" stroke-linecap="round"/></svg></div><div class="btn r" style="left:3239.5px"><svg style="left:15px;top:11.500px" width="23.500" height="24.500" viewBox="0 0 24 25" fill="#fbb9ba"><path d="M8 0 H16 V2.500 H8 Z"/><rect x="0" y="3.500" width="24" height="3.600" rx="1"/><path d="M2.500 8.800 H21.500 L20.300 23.500 A1.500 1.500 0 0 1 18.800 25 H5.200 A1.500 1.500 0 0 1 3.700 23.500 Z"/><path d="M8.300 11.500 V22 M12 11.500 V22 M15.700 11.500 V22" stroke="#f03e40" stroke-width="1.700" fill="none"/></svg></div><div class="btn b" style="left:3299.5px"><svg style="left:14.500px;top:12.500px" width="24.500" height="23.500" viewBox="0 0 24.500 23.500" fill="#a6dafb"><rect x="0" y="0" width="2" height="23.500"/><rect x="3" y="0.500" width="5.500" height="5.500"/><rect x="10" y="0" width="6.800" height="6" fill="#fff"/><rect x="3" y="8.500" width="5.500" height="6"/><rect x="10" y="8" width="10.800" height="6.500" fill="#e8f5fe"/><rect x="3" y="17" width="8" height="6"/><rect x="12.500" y="17" width="12" height="6" fill="#fff"/></svg></div></div>
<div class="hl" style="top:918px"></div>
<div class="row" style="top:920px"><i class="cb" style="top:22px"></i><span class="c1">9</span><span class="c2"><a>sql-0-1574250553788</a></span><span class="c3">调度执行</span><span class="c4 d">2019-11-20 19:49:13</span><span class="c5 d">2019-11-20 19:49:13</span><span class="c6 d">2019-11-20 19:49:19</span><span class="c7">7</span><span class="c8">1</span><span class="c9 ip">192.168.220.188</span><span class="c10">NO</span><svg style="left:2883px;top:25px" width="26" height="26" viewBox="0 0 26 26"><circle cx="13" cy="13" r="13" fill="#2fc32f"/><path d="M7.300 13.600 L11.300 17.400 L18.900 9.700" fill="none" stroke="#fff" stroke-width="2.500" stroke-linecap="round" stroke-linejoin="round"/></svg><div class="btn b" style="left:2939.5px"><svg style="left:12px;top:11px" width="28" height="27" viewBox="0 0 28 27" fill="none" stroke="#a6dafb" stroke-width="2.1" stroke-linejoin="round" stroke-linecap="round"><path d="M13.5 5.500 H4 A2 2 0 0 0 2 7.500 V23 A2 2 0 0 0 4 25 H20.500 A2 2 0 0 0 22.500 23 V13.500"/><path d="M9.500 17.800 L10.300 14.300 L22.500 2.100 L25.300 4.900 L13.100 17.100 Z" stroke-width="1.700"/><path d="M10.300 17 L23.500 3.800" stroke-width="1.400"/></svg></div><div class="btn b" style="left:2999.5px"><svg style="left:13px;top:14px" width="27" height="21" viewBox="0 0 27 21" fill="none" stroke="#a6dafb" stroke-width="2.200" stroke-linecap="round"><path d="M4.800 10 A8.700 8.700 0 0 1 20.800 5.300"/><path d="M22.200 11 A8.700 8.700 0 0 1 6.200 15.700"/><path d="M26 9.300 L18.500 8.800 L23 3.200 Z" fill="#a6dafb" stroke="none"/><path d="M1 11.700 L8.500 12.200 L4 17.800 Z" fill="#a6dafb" stroke="none"/></svg></div><div class="btn g" style="left:3059.5px"><svg style="left:12px;top:10px" width="26" height="26" viewBox="0 0 26 26" fill="none" stroke="#d6d8e0" stroke-width="2"><circle cx="13" cy="13" r="11.500"/><path d="M8.300 8.300 L17.700 17.700 M17.700 8.300 L8.300 17.700" stroke-linecap="round" stroke-width="1.800"/></svg></div><div class="btn g" style="left:3119.5px"><svg style="left:12px;top:10px" width="26" height="26" viewBox="0 0 26 26" fill="none" stroke="#d6d8e0" stroke-width="2"><circle cx="13" cy="13" r="11.500"/><rect x="8.500" y="8.500" width="9" height="9" rx="1" fill="#c6c8d0" stroke="none"/></svg></div><div class="btn g" style="left:3179.5px"><svg style="left:11.500px;top:10px" width="26" height="26" viewBox="0 0 26 26" fill="none" stroke="#d6d8e0" stroke-width="2"><circle cx="13" cy="13" r="11.500"/><path d="M9.800 8.500 V17.500 M16.200 8.500 V17.500" stroke-width="2" stroke-linecap="round"/></svg></div><div class="btn r" style="left:3239.5px"><svg style="left:15px;top:11.500px" width="23.500" height="24.500" viewBox="0 0 24 25" fill="#fbb9ba"><path d="M8 0 H16 V2.500 H8 Z"/><rect x="0" y="3.500" width="24" height="3.600" rx="1"/><path d="M2.500 8.800 H21.500 L20.300 23.500 A1.500 1.500 0 0 1 18.800 25 H5.200 A1.500 1.500 0 0 1 3.700 23.500 Z"/><path d="M8.300 11.500 V22 M12 11.500 V22 M15.700 11.500 V22" stroke="#f03e40" stroke-width="1.700" fill="none"/></svg></div><div class="btn b" style="left:3299.5px"><svg style="left:14.500px;top:12.500px" width="24.500" height="23.500" viewBox="0 0 24.500 23.500" fill="#a6dafb"><rect x="0" y="0" width="2" height="23.500"/><rect x="3" y="0.500" width="5.500" height="5.500"/><rect x="10" y="0" width="6.800" height="6" fill="#fff"/><rect x="3" y="8.500" width="5.500" height="6"/><rect x="10" y="8" width="10.800" height="6.500" fill="#e8f5fe"/><rect x="3" y="17" width="8" height="6"/><rect x="12.500" y="17" width="12" height="6" fill="#fff"/></svg></div></div>
<div class="hl" style="top:998px"></div>
<div class="row" style="top:1000px"><i class="cb" style="top:22px"></i><span class="c1">10</span><span class="c2"><a>sql-0-1574250548757</a></span><span class="c3">调度执行</span><span class="c4 d">2019-11-20 19:49:08</span><span class="c5 d">2019-11-20 19:49:08</span><span class="c6 d">2019-11-20 19:49:15</span><span class="c7">8</span><span class="c8">1</span><span class="c9 ip">192.168.220.188</span><span class="c10">NO</span><svg style="left:2883px;top:25px" width="26" height="26" viewBox="0 0 26 26"><circle cx="13" cy="13" r="13" fill="#2fc32f"/><path d="M7.300 13.600 L11.300 17.400 L18.900 9.700" fill="none" stroke="#fff" stroke-width="2.500" stroke-linecap="round" stroke-linejoin="round"/></svg><div class="btn b" style="left:2939.5px"><svg style="left:12px;top:11px" width="28" height="27" viewBox="0 0 28 27" fill="none" stroke="#a6dafb" stroke-width="2.1" stroke-linejoin="round" stroke-linecap="round"><path d="M13.5 5.500 H4 A2 2 0 0 0 2 7.500 V23 A2 2 0 0 0 4 25 H20.500 A2 2 0 0 0 22.500 23 V13.500"/><path d="M9.500 17.800 L10.300 14.300 L22.500 2.100 L25.300 4.900 L13.100 17.100 Z" stroke-width="1.700"/><path d="M10.300 17 L23.500 3.800" stroke-width="1.400"/></svg></div><div class="btn b" style="left:2999.5px"><svg style="left:13px;top:14px" width="27" height="21" viewBox="0 0 27 21" fill="none" stroke="#a6dafb" stroke-width="2.200" stroke-linecap="round"><path d="M4.800 10 A8.700 8.700 0 0 1 20.800 5.300"/><path d="M22.200 11 A8.700 8.700 0 0 1 6.200 15.700"/><path d="M26 9.300 L18.500 8.800 L23 3.200 Z" fill="#a6dafb" stroke="none"/><path d="M1 11.700 L8.500 12.200 L4 17.800 Z" fill="#a6dafb" stroke="none"/></svg></div><div class="btn g" style="left:3059.5px"><svg style="left:12px;top:10px" width="26" height="26" viewBox="0 0 26 26" fill="none" stroke="#d6d8e0" stroke-width="2"><circle cx="13" cy="13" r="11.500"/><path d="M8.300 8.300 L17.700 17.700 M17.700 8.300 L8.300 17.700" stroke-linecap="round" stroke-width="1.800"/></svg></div><div class="btn g" style="left:3119.5px"><svg style="left:12px;top:10px" width="26" height="26" viewBox="0 0 26 26" fill="none" stroke="#d6d8e0" stroke-width="2"><circle cx="13" cy="13" r="11.500"/><rect x="8.500" y="8.500" width="9" height="9" rx="1" fill="#c6c8d0" stroke="none"/></svg></div><div class="btn g" style="left:3179.5px"><svg style="left:11.500px;top:10px" width="26" height="26" viewBox="0 0 26 26" fill="none" stroke="#d6d8e0" stroke-width="2"><circle cx="13" cy="13" r="11.500"/><path d="M9.800 8.500 V17.500 M16.200 8.500 V17.500" stroke-width="2" stroke-linecap="round"/></svg></div><div class="btn r" style="left:3239.5px"><svg style="left:15px;top:11.500px" width="23.500" height="24.500" viewBox="0 0 24 25" fill="#fbb9ba"><path d="M8 0 H16 V2.500 H8 Z"/><rect x="0" y="3.500" width="24" height="3.600" rx="1"/><path d="M2.500 8.800 H21.500 L20.300 23.500 A1.500 1.500 0 0 1 18.800 25 H5.200 A1.500 1.500 0 0 1 3.700 23.500 Z"/><path d="M8.300 11.500 V22 M12 11.500 V22 M15.700 11.500 V22" stroke="#f03e40" stroke-width="1.700" fill="none"/></svg></div><div class="btn b" style="left:3299.5px"><svg style="left:14.500px;top:12.500px" width="24.500" height="23.500" viewBox="0 0 24.500 23.500" fill="#a6dafb"><rect x="0" y="0" width="2" height="23.500"/><rect x="3" y="0.500" width="5.500" height="5.500"/><rect x="10" y="0" width="6.800" height="6" fill="#fff"/><rect x="3" y="8.500" width="5.500" height="6"/><rect x="10" y="8" width="10.800" height="6.500" fill="#e8f5fe"/><rect x="3" y="17" width="8" height="6"/><rect x="12.500" y="17" width="12" height="6" fill="#fff"/></svg></div></div>
<div class="hl" style="top:1078px"></div>
<div class="pg" style="left:2348px"><svg style="left:20px;top:16px" width="11" height="19" viewBox="0 0 11 19" fill="none" stroke="#cfd2d8" stroke-width="2" stroke-linecap="round" stroke-linejoin="round"><path d="M9.500 1.500 L1.500 9.500 L9.500 17.500"/></svg></div>
<div class="pg on" style="left:2424px">1</div>
<div class="pg" style="left:2500px">2</div>
<div class="pg" style="left:2576px">3</div>
<div class="pg" style="left:2652px">4</div>
<div class="pg" style="left:2728px">5</div>
<div class="pg" style="left:2804px">6</div>
<div class="pg" style="left:2880px"><span style="font-size:17px;letter-spacing:-.6px;position:relative;top:-4px;font-weight:700">···</span></div>
<div class="pg" style="left:2956px">98</div>
<div class="pg" style="left:3032px"><svg style="left:18.500px;top:16px" width="12" height="19" viewBox="0 0 12 19" fill="none" stroke="#7b828e" stroke-width="2" stroke-linecap="round" stroke-linejoin="round"><path d="M1.500 1.500 L10.500 9.500 L1.500 17.500"/></svg></div>
<div style="position:absolute;left:3128px;top:1130.0px;height:36px;line-height:36px;font-size:24px;color:#5a6270;white-space:nowrap;">跳转至</div>
<div class="pg" style="left:3220px"></div>
<div style="position:absolute;left:3296px;top:1130.0px;height:36px;line-height:36px;font-size:24px;color:#5a6270;white-space:nowrap;">页</div>
</main>
</body></html>
